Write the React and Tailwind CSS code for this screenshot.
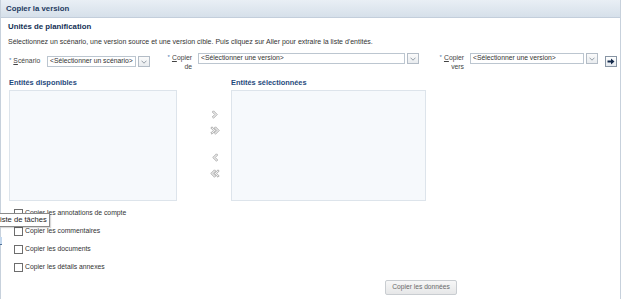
import React from 'react';

const FONT = { fontFamily: '"Liberation Sans", Arial, sans-serif' };

function Chevron({ dir = 'right', double = false }) {
  const one = 'M1.5 0.8 L5.2 4.5 L1.5 8.2 L0.3 7 L2.8 4.5 L0.3 2 Z';
  return (
    <svg width="10" height="9" viewBox="0 0 10 9" className={dir === 'left' ? 'scale-x-[-1]' : ''}>
      <path d={one} transform={double ? 'translate(0.5 0)' : 'translate(2 0)'} fill="#f2f2f2" stroke="#8f8f8f" strokeWidth="0.7" strokeLinejoin="round" />
      {double && <path d={one} transform="translate(4 0)" fill="#f2f2f2" stroke="#8f8f8f" strokeWidth="0.7" strokeLinejoin="round" />}
    </svg>
  );
}

function Select({ text, width }) {
  return (
    <div className="flex items-center gap-[2px]">
      <div className={`${width} h-[11px] border border-[#bcc6d0] bg-white flex items-center pl-[2px] text-[6.8px] leading-none text-[#333]`}>
        {text}
      </div>
      <div className="w-[12px] h-[11px] border border-[#b3bcc6] bg-gradient-to-b from-[#fbfbfb] to-[#e9ecef] flex items-center justify-center">
        <svg width="6" height="4" viewBox="0 0 6 4">
          <path d="M0.5 0.7 L3 3.2 L5.5 0.7" fill="none" stroke="#7b8692" strokeWidth="0.8" />
        </svg>
      </div>
    </div>
  );
}

function Req() {
  return <span className="text-[#3f73ad] text-[6px] leading-none mr-[2px] relative top-[-1px]">*</span>;
}

function Check({ label }) {
  return (
    <div className="flex items-center h-[9px] gap-[2px]">
      <div className="w-[9px] h-[9px] border border-[#6d6d6d] bg-white" />
      <span className="text-[6.8px] leading-none text-[#333]">{label}</span>
    </div>
  );
}

export default function App() {
  return (
    <div className="relative w-[624px] h-[299px] bg-white overflow-hidden" style={FONT}>
      <div className="w-[621px] h-full border-l border-r border-[#c7d1dc] flex flex-col">
        <div className="h-[18px] shrink-0 flex items-center pl-[5px] bg-gradient-to-b from-[#e9eff5] to-[#d6e0ea] border-b border-[#c3cedb]">
          <span className="text-[7.8px] font-bold text-[#1d3a60] leading-none">Copier la version</span>
        </div>

        <div className="pl-[7px]">
          <div className="mt-[4px] leading-[10px] text-[7.8px] font-bold text-[#132f55]">Unités de planification</div>
          <div className="mt-[5px] leading-[10px] text-[7px] text-[#333]">
            Sélectionnez un scénario, une version source et une version cible. Puis cliquez sur Aller pour extraire la liste d'entités.
          </div>

          <div className="mt-[6px] flex items-start h-[19px]">
            <div className="flex items-center pt-[3px]">
              <div className="flex items-center text-[6.8px] leading-none text-[#444] w-[39px] pl-[1px]">
                <Req />
                <span><span className="underline">S</span>cénario</span>
              </div>
              <Select text="<Sélectionner un scénario>" width="w-[89px]" />
            </div>

            <div className="flex items-start ml-[17px]">
              <div className="flex flex-col items-end text-[6.8px] leading-[9px] text-[#444] w-[25px]">
                <span><Req /><span className="underline">C</span>opier</span>
                <span>de</span>
              </div>
              <div className="ml-[6px]">
                <Select text="<Sélectionner une version>" width="w-[207px]" />
              </div>
            </div>

            <div className="flex items-start ml-[20px]">
              <div className="flex flex-col items-end text-[6.8px] leading-[9px] text-[#444] w-[25px]">
                <span><Req /><span className="underline">C</span>opier</span>
                <span>vers</span>
              </div>
              <div className="ml-[6px]">
                <Select text="<Sélectionner une version>" width="w-[114px]" />
              </div>
            </div>

            <div className="ml-[7px] mt-[3px] w-[12px] h-[11px] border border-[#8794a3] bg-gradient-to-b from-[#ffffff] to-[#e4e9ee] flex items-center justify-center">
              <svg width="8" height="7" viewBox="0 0 8 7">
                <path d="M0.5 2.6 H4 V0.6 L7.5 3.5 L4 6.4 V4.4 H0.5 Z" fill="#13294a" />
              </svg>
            </div>
          </div>

          <div className="mt-[6px] ml-[1px] grid grid-cols-[168px_54px_195px]">
            <div className="leading-[10px] text-[7.4px] font-bold text-[#1f4a7c]">Entités disponibles</div>
            <div />
            <div className="leading-[10px] text-[7.4px] font-bold text-[#1f4a7c]">Entités sélectionnées</div>

            <div className="mt-[2px] h-[111px] bg-[#f6f9fc] border border-[#dde4eb]" />
            <div className="mt-[2px] flex flex-col pl-[33px]">
              <div className="mt-[20px]"><Chevron /></div>
              <div className="mt-[7px]"><Chevron double /></div>
              <div className="mt-[18px]"><Chevron dir="left" /></div>
              <div className="mt-[7px]"><Chevron dir="left" double /></div>
            </div>
            <div className="mt-[2px] h-[111px] bg-[#f6f9fc] border border-[#dde4eb]" />
          </div>

          <div className="mt-[8px] ml-[6px] flex flex-col gap-[9px]">
            <Check label="Copier les annotations de compte" />
            <Check label="Copier les commentaires" />
            <Check label="Copier les documents" />
            <Check label="Copier les détails annexes" />
          </div>

          <div className="mt-[8px] ml-[377px]">
            <div className="w-[72px] h-[15px] rounded-[2px] border border-[#c9cdd1] bg-gradient-to-b from-[#f7f7f7] to-[#e6e7e8] flex items-center justify-center text-[6.7px] text-[#6a6a6a] leading-none">
              Copier les données
            </div>
          </div>
        </div>
      </div>

      <div className="absolute left-0 top-[213px] h-[14px] border-y border-r border-[#8a8a8a] bg-white pr-[2px] flex items-center text-[7.6px] text-[#222] leading-none shadow-[1px_1px_1px_rgba(0,0,0,0.15)]">
        iste de tâches
      </div>
      <div className="absolute left-0 top-[237px] w-[2px] h-[8px] bg-[#c4d8ee] border-b border-[#4d6f96]" />
    </div>
  );
}
